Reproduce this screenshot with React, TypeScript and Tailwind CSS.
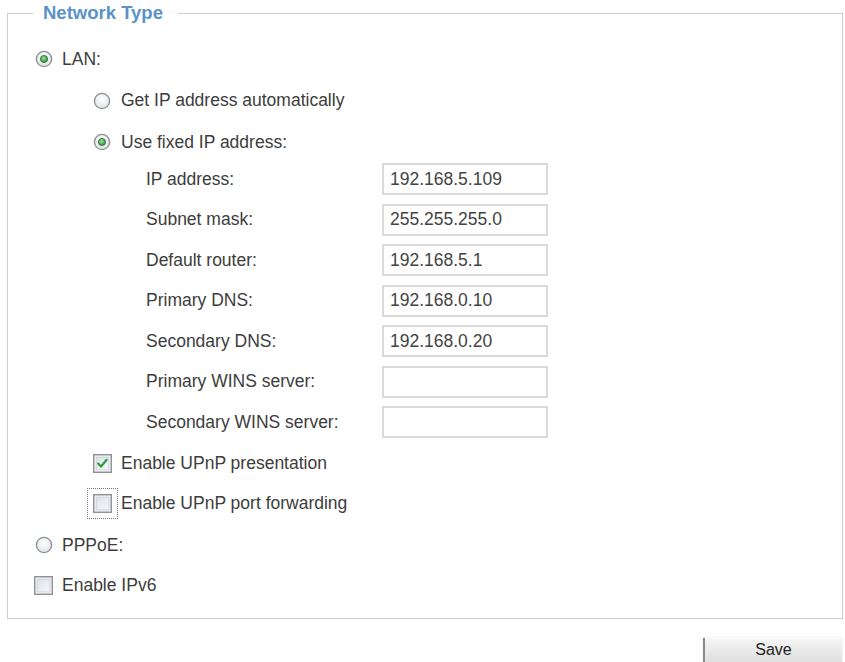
import React from "react";

const fixedFields = [
  { label: "IP address:", value: "192.168.5.109" },
  { label: "Subnet mask:", value: "255.255.255.0" },
  { label: "Default router:", value: "192.168.5.1" },
  { label: "Primary DNS:", value: "192.168.0.10" },
  { label: "Secondary DNS:", value: "192.168.0.20" },
  { label: "Primary WINS server:", value: "" },
  { label: "Secondary WINS server:", value: "" },
];

function Radio({ checked }: { checked?: boolean }) {
  return (
    <svg width="18" height="18" viewBox="0 0 18 18" className="shrink-0">
      <defs>
        <radialGradient id={checked ? "rg-on" : "rg-off"} cx="50%" cy="40%" r="60%">
          <stop offset="0%" stopColor="#ffffff" />
          <stop offset="100%" stopColor="#dfe3e6" />
        </radialGradient>
        <radialGradient id="rg-dot" cx="45%" cy="40%" r="60%">
          <stop offset="0%" stopColor="#9be09f" />
          <stop offset="100%" stopColor="#2f8a3c" />
        </radialGradient>
      </defs>
      <circle cx="9" cy="9" r="7.6" fill={`url(#${checked ? "rg-on" : "rg-off"})`} stroke="#8d9296" strokeWidth="1.4" />
      {checked ? <circle cx="9" cy="9" r="3.6" fill="url(#rg-dot)" stroke="#2c6e35" strokeWidth="0.8" /> : null}
    </svg>
  );
}

function Checkbox({ checked }: { checked?: boolean }) {
  return (
    <svg width="19" height="19" viewBox="0 0 19 19" className="shrink-0">
      <defs>
        <linearGradient id="cb-fill" x1="0" y1="0" x2="1" y2="1">
          <stop offset="0%" stopColor="#dbe1e7" />
          <stop offset="100%" stopColor="#f7f8f9" />
        </linearGradient>
      </defs>
      <rect x="0.75" y="0.75" width="17.5" height="17.5" fill="#ffffff" stroke="#8e9499" strokeWidth="1.5" />
      <rect x="3" y="3" width="13" height="13" fill="url(#cb-fill)" stroke="#c3c9ce" strokeWidth="0.8" />
      {checked ? <path d="M5.2 9.6 L8 12.6 L13.6 5.8" fill="none" stroke="#2f9a3e" strokeWidth="2.2" strokeLinecap="round" strokeLinejoin="round" /> : null}
    </svg>
  );
}

export default function App() {
  return (
    <div className="w-[845px] h-[662px] overflow-hidden bg-white font-['Liberation_Sans',Arial,sans-serif] text-[17.5px] text-[#3d3d3d]">
      <fieldset className="ml-[7px] mt-[2px] w-[836px] border border-[#cfcfcf] shadow-[0_0_1px_#e2e2e2] pb-[14px]">
        <legend className="ml-[25px] pl-[10px] pr-[15px] text-[18.5px] font-bold leading-[22px] text-[#5b93c7]">Network Type</legend>

        <div className="pt-[14px]">
          <div className="flex h-[42px] items-center pl-[27px]">
            <Radio checked />
            <span className="ml-[9px]">LAN:</span>
          </div>
          <div className="flex h-[41px] items-center pl-[85px]">
            <Radio />
            <span className="ml-[10px]">Get IP address automatically</span>
          </div>
          <div className="flex h-[42px] items-center pl-[85px]">
            <Radio checked />
            <span className="ml-[10px]">Use fixed IP address:</span>
          </div>

          <div className="flex flex-col gap-[8.5px]">
            {fixedFields.map((field) => (
              <div key={field.label} className="flex h-[32px] items-center">
                <span className="w-[374px] pl-[138px]">{field.label}</span>
                <div className="flex h-[32px] w-[166px] items-center border-2 border-[#dadada] px-[6px] text-[#444]">{field.value}</div>
              </div>
            ))}
          </div>

          <div className="mt-[5px] flex h-[40px] items-center pl-[85px]">
            <Checkbox checked />
            <span className="ml-[9px]">Enable UPnP presentation</span>
          </div>
          <div className="flex h-[40px] items-center pl-[85px]">
            <span className="outline outline-1 outline-dotted outline-offset-[5px] outline-[#777]">
              <Checkbox />
            </span>
            <span className="ml-[9px]">Enable UPnP port forwarding</span>
          </div>
          <div className="mt-[1px] flex h-[42px] items-center pl-[27px]">
            <Radio />
            <span className="ml-[9px]">PPPoE:</span>
          </div>
          <div className="flex h-[38px] items-center pl-[26px]">
            <Checkbox />
            <span className="ml-[9px]">Enable IPv6</span>
          </div>
        </div>
      </fieldset>

      <div className="mt-[19px] flex justify-end pr-[3px]">
        <button className="h-[30px] w-[139px] border-l-2 border-[#8a8a8a] bg-gradient-to-b from-[#f6f6f6] to-[#d9d9d9] pb-[6px] text-[16px] text-[#222] shadow-[inset_0_1px_0_#ffffff,0_0_1px_#bdbdbd]">
          Save
        </button>
      </div>
    </div>
  );
}
